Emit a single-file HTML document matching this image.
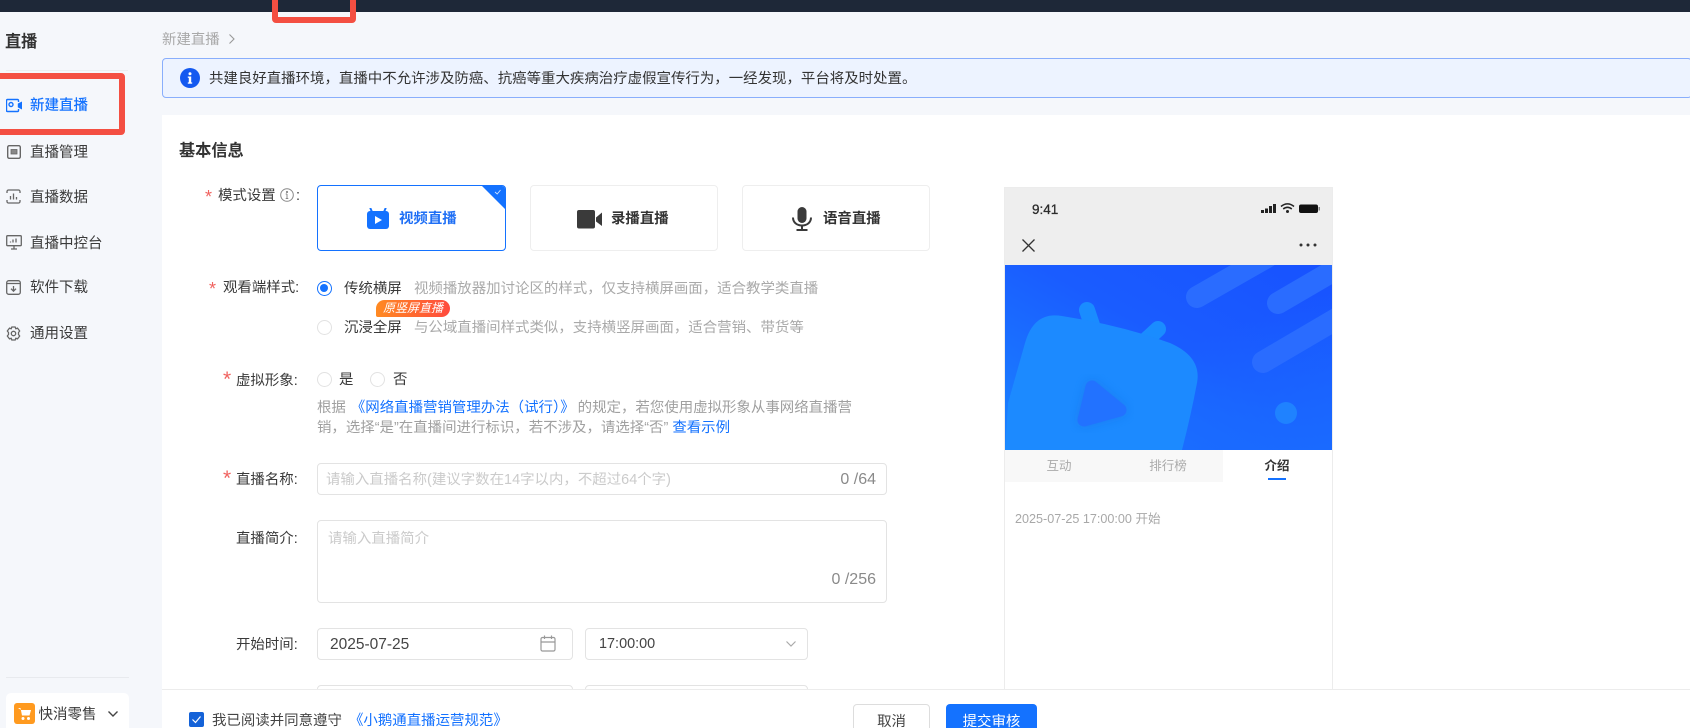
<!DOCTYPE html>
<html lang="zh"><head><meta charset="utf-8"><title>新建直播</title>
<style>
html,body{margin:0;padding:0;width:1690px;height:728px;overflow:hidden}
#w{position:relative;width:1690px;height:728px;overflow:hidden;background:#f5f7fb;font-family:"Liberation Sans","Noto Sans CJK SC",sans-serif;font-size:14.45px;color:#3a3a3a}
.a{position:absolute;box-sizing:border-box}
.t{position:absolute;white-space:nowrap;line-height:20px;margin-top:1px}
.g{color:#a9a9a9}.b{color:#1472ff}.s{color:#f0625f;font-size:18px;font-family:"Liberation Sans",sans-serif}
.box{position:absolute;box-sizing:border-box;background:#fff;border:1px solid #e3e3e3;border-radius:4px}
.card{position:absolute;box-sizing:border-box;background:#fff;border:1px solid #eee;border-radius:4px;top:185px;height:66px}
.r{position:absolute;box-sizing:border-box;width:15px;height:15px;border-radius:50%;border:1px solid #e2e2e2;background:#fff}
svg{position:absolute;display:block}
</style></head><body><div id="w">
<div class="a" style="left:0;top:0;width:1690px;height:12px;background:#1e2838"></div>

<!-- sidebar -->
<div class="t" style="left:5px;top:31px;font-size:16.2px;font-weight:700;color:#333">直播</div>
<div class="a" style="left:6px;top:70px;width:122px;height:1px;background:#ebedf0"></div>
<svg style="left:6px;top:98px" width="16" height="15" viewBox="0 0 16 15" fill="none" stroke="#1472ff" stroke-width="1.4"><path d="M12.5 4V2.5a1 1 0 0 0-1-1h-10a1 1 0 0 0-1 1v10a1 1 0 0 0 1 1h10a1 1 0 0 0 1-1V11"/><circle cx="5" cy="6.5" r="2"/><path d="M12.5 6l3-1.5v6l-3-1.5z" fill="#1472ff"/></svg>
<div class="t b" style="left:30px;top:95px;font-size:14.5px;font-weight:500">新建直播</div>
<svg style="left:7px;top:145px" width="14" height="14" viewBox="0 0 14 14" fill="none" stroke="#666" stroke-width="1.4"><rect x=".7" y=".7" width="12.6" height="12.6" rx="1.5"/><rect x="4" y="4.5" width="6" height="4.5" fill="#888" stroke-width=".8"/></svg>
<div class="t" style="left:30px;top:142px;font-size:14.5px">直播管理</div>
<svg style="left:6px;top:189px" width="15" height="15" viewBox="0 0 15 15" fill="none" stroke="#666" stroke-width="1.3"><path d="M1 4V2.5A1.5 1.5 0 0 1 2.500 1H12.500A1.500 1.500 0 0 1 14 2.500V4M1 11V12.500A1.500 1.500 0 0 0 2.500 14H12.500A1.500 1.500 0 0 0 14 12.500V11"/><path d="M4.500 7V10.500M7.500 4.500V10.500M10.500 8V10.500"/></svg>
<div class="t" style="left:30px;top:187px;font-size:14.5px">直播数据</div>
<svg style="left:6px;top:235px" width="16" height="15" viewBox="0 0 16 15" fill="none" stroke="#666" stroke-width="1.3"><rect x=".7" y=".7" width="14.600" height="10" rx="1"/><path d="M8 10.700V14M5 14H11M4.500 7.500L4.500 6.500M7 7.500V4.500M10 7.500V3.500"/></svg>
<div class="t" style="left:30px;top:233px;font-size:14.5px">直播中控台</div>
<svg style="left:6px;top:280px" width="15" height="15" viewBox="0 0 15 15" fill="none" stroke="#666" stroke-width="1.3"><rect x=".7" y=".7" width="13.600" height="13.600" rx="2"/><path d="M1 3.500H14M7.500 6V11M5 8.700L7.500 11.200L10 8.700"/></svg>
<div class="t" style="left:30px;top:277px;font-size:14.5px">软件下载</div>
<svg style="left:6px;top:326px" width="15" height="15" viewBox="0 0 15 15" fill="none" stroke="#666" stroke-width="1.3"><path d="M5.800 1H9.200L9.800 2.800L11.500 2.100L13.700 5L12.500 6.500V8.500L13.700 10L11.500 12.900L9.800 12.200L9.200 14H5.800L5.200 12.200L3.500 12.900L1.300 10L2.500 8.500V6.500L1.300 5L3.500 2.100L5.200 2.800Z" stroke-linejoin="round"/><circle cx="7.500" cy="7.500" r="2.200"/></svg>
<div class="t" style="left:30px;top:323px;font-size:14.5px">通用设置</div>
<div class="a" style="left:6px;top:677px;width:123px;height:1px;background:#e8eaee"></div>
<div class="a" style="left:6px;top:693px;width:123px;height:40px;background:#fff;border-radius:5px"></div>
<svg style="left:14px;top:703px" width="21" height="21" viewBox="0 0 21 21"><rect width="21" height="21" rx="3" fill="#ff9a1f"/><path d="M4 5H6.500L8 12.500H15.500L17 7H7" fill="#fff"/><circle cx="9" cy="15.500" r="1.500" fill="#fff"/><circle cx="14.500" cy="15.500" r="1.500" fill="#fff"/></svg>
<div class="t" style="left:38.500px;top:704px;font-size:14.5px">快消零售</div>
<svg style="left:107px;top:710px" width="12" height="8" viewBox="0 0 12 8" fill="none" stroke="#444" stroke-width="1.400"><path d="M1.500 1.500L6 6L10.500 1.500"/></svg>

<!-- breadcrumb + alert -->
<div class="t g" style="left:162px;top:29px">新建直播</div>
<svg style="left:228px;top:33px" width="8" height="12" viewBox="0 0 8 12" fill="none" stroke="#999" stroke-width="1.100"><path d="M1.500 1.500L6 6L1.500 10.500"/></svg>
<div class="a" style="left:162px;top:58px;width:1530px;height:40px;background:#edf3ff;border:1px solid #89aefc;border-radius:4px"></div>
<svg style="left:180px;top:68px" width="20" height="20" viewBox="0 0 20 20"><circle cx="10" cy="10" r="10" fill="#1459f0"/><rect x="8.800" y="8.500" width="2.400" height="7" fill="#fff"/><rect x="7.800" y="8.500" width="3" height="1.300" fill="#fff"/><rect x="7.800" y="14.400" width="4.400" height="1.300" fill="#fff"/><circle cx="10" cy="5.800" r="1.500" fill="#fff"/></svg>
<div class="t" style="left:209px;top:68px;color:#333">共建良好直播环境，直播中不允许涉及防癌、抗癌等重大疾病治疗虚假宣传行为，一经发现，平台将及时处置。</div>

<!-- main card -->
<div class="a" style="left:162px;top:115px;width:1528px;height:613px;background:#fff"></div>
<div class="t" style="left:179px;top:140px;font-size:16.2px;font-weight:700;color:#333">基本信息</div>

<!-- mode -->
<div class="t s" style="left:205px;top:186px">*</div>
<div class="t" style="left:218px;top:185px">模式设置</div>
<svg style="left:280px;top:188px" width="14" height="14" viewBox="0 0 14 14" fill="none" stroke="#888"><circle cx="7" cy="7" r="6.300"/><path d="M7 6V10.500M5.700 10.500H8.300M5.700 6H7"/><circle cx="7" cy="4" r=".6" fill="#888"/></svg>
<div class="t" style="left:296px;top:185px">:</div>
<div class="card" style="left:317px;width:189px;border:1px solid #1472ff;overflow:hidden">
<svg style="right:-1px;top:-1px" width="25" height="25" viewBox="0 0 25 25"><path d="M0 0H25V25Z" fill="#1472ff"/><path d="M14 7L16.200 9L19.500 5" fill="none" stroke="#cfe2ff" stroke-width=".9"/></svg>
</div>
<svg style="left:367px;top:208px" width="22" height="21" viewBox="0 0 22 21"><path d="M5 4L3.500 .5M17 4L18.500 .5" stroke="#1472ff" stroke-width="2" stroke-linecap="round"/><rect y="3" width="22" height="18" rx="3" fill="#1472ff"/><path d="M8 8L15 12L8 16Z" fill="#fff"/></svg>
<div class="t b" style="left:399px;top:208px;font-weight:700;color:#1f6ff5">视频直播</div>
<div class="card" style="left:530px;width:188px"></div>
<svg style="left:577px;top:210px" width="26" height="19" viewBox="0 0 26 19"><rect width="18" height="18.500" rx="2" fill="#3a3a3a"/><path d="M19 7.500L25 2.500V16L19 11.500Z" fill="#3a3a3a"/></svg>
<div class="t" style="left:611px;top:208px;font-weight:700;color:#333">录播直播</div>
<div class="card" style="left:742px;width:188px"></div>
<svg style="left:792px;top:207px" width="20" height="24" viewBox="0 0 20 24" fill="none"><rect x="5.500" y="0" width="9" height="16" rx="4.500" fill="#3a3a3a"/><path d="M1 10.500C1 15.500 5 18.500 10 18.500S19 15.500 19 10.500" stroke="#3a3a3a" stroke-width="2"/><path d="M10 18.500V23M4.500 23H15.500" stroke="#3a3a3a" stroke-width="2"/></svg>
<div class="t" style="left:823px;top:208px;font-weight:700;color:#333">语音直播</div>

<!-- viewer style -->
<div class="t s" style="left:209px;top:278px">*</div>
<div class="t" style="left:223px;top:277px">观看端样式:</div>
<div class="r" style="left:317px;top:281px;border:1.300px solid #1472ff"><div class="a" style="left:2.200px;top:2.200px;width:8px;height:8px;border-radius:50%;background:#1472ff"></div></div>
<div class="t" style="left:344px;top:278px">传统横屏</div>
<div class="t g" style="left:414px;top:278px">视频播放器加讨论区的样式，仅支持横屏画面，适合教学类直播</div>
<div class="r" style="left:317px;top:320px"></div>
<div class="t" style="left:344px;top:317px">沉浸全屏</div>
<div class="t g" style="left:414px;top:317px">与公域直播间样式类似，支持横竖屏画面，适合营销、带货等</div>
<div class="a" style="left:376px;top:300px;width:74px;height:17px;border-radius:9px 9px 9px 2px;background:linear-gradient(90deg,#ff8a22,#ff4a3e);color:#fff;font-size:12px;line-height:17px;text-align:center;font-style:italic;white-space:nowrap">原竖屏直播</div>

<!-- virtual -->
<div class="t s" style="left:223px;top:369px;font-size:21px">*</div>
<div class="t" style="left:236px;top:370px">虚拟形象:</div>
<div class="r" style="left:317px;top:372px"></div>
<div class="t" style="left:339px;top:369px">是</div>
<div class="r" style="left:370px;top:372px"></div>
<div class="t" style="left:393px;top:369px">否</div>
<div class="t g" style="left:317px;top:397px;color:#a0a0a0">根据<span class="b" style="margin:0 3px 0 5px">《网络直播营销管理办法（试行）》</span>的规定，若您使用虚拟形象从事网络直播营</div>
<div class="t g" style="left:317px;top:417px;color:#a0a0a0">销，选择“是”在直播间进行标识，若不涉及，请选择“否” <span class="b">查看示例</span></div>

<!-- name -->
<div class="t s" style="left:223px;top:468px;font-size:21px">*</div>
<div class="t" style="left:236px;top:469px">直播名称:</div>
<div class="box" style="left:317px;top:463px;width:570px;height:32px"></div>
<div class="t" style="left:326px;top:469px;color:#cbcbcb">请输入直播名称(建议字数在14字以内，不超过64个字)</div>
<div class="t" style="right:814px;top:469px;color:#8a8a8a;font-size:16px">0 /64</div>

<!-- intro -->
<div class="t" style="left:236px;top:528px">直播简介:</div>
<div class="box" style="left:317px;top:520px;width:570px;height:83px"></div>
<div class="t" style="left:328px;top:528px;color:#cbcbcb">请输入直播简介</div>
<div class="t" style="right:814px;top:569px;color:#8a8a8a;font-size:16px">0 /256</div>

<!-- time -->
<div class="t" style="left:236px;top:634px">开始时间:</div>
<div class="box" style="left:317px;top:628px;width:256px;height:32px"></div>
<div class="t" style="left:330px;top:634px;color:#444;font-size:15.500px">2025-07-25</div>
<svg style="left:540px;top:635px" width="16" height="17" viewBox="0 0 16 17" fill="none" stroke="#999" stroke-width="1.200"><rect x="1" y="2.500" width="14" height="13.500" rx="1.500"/><path d="M1 7H15M4.500 .5V4M11.500 .5V4"/></svg>
<div class="box" style="left:585px;top:628px;width:223px;height:32px"></div>
<div class="t" style="left:599px;top:633px;color:#444">17:00:00</div>
<svg style="left:785px;top:640px" width="12" height="8" viewBox="0 0 12 8" fill="none" stroke="#aaa" stroke-width="1.200"><path d="M1.500 1.500L6 6L10.500 1.500"/></svg>
<div class="box" style="left:317px;top:685px;width:256px;height:33px"></div>
<div class="box" style="left:585px;top:685px;width:223px;height:33px"></div>

<!-- phone -->
<div class="a" style="left:1004px;top:187px;width:329px;height:510px;background:#fff;border:1px solid #ececec"></div>
<div class="a" style="left:1005px;top:188px;width:327px;height:77px;background:#eee"></div>
<div class="t" style="left:1032px;top:200px;margin-top:0;font-size:13.500px;font-family:'Liberation Sans',sans-serif;color:#2c2c2c;-webkit-text-stroke:.3px #2c2c2c">9:41</div>
<svg style="left:1260px;top:202px" width="60" height="12" viewBox="0 0 60 12"><rect x="1" y="8" width="3" height="3" fill="#222"/><rect x="5" y="6.500" width="3" height="4.500" fill="#222"/><rect x="9" y="4" width="3" height="7" fill="#222"/><rect x="13" y="2" width="3" height="9" fill="#222"/><path d="M21 4.500C25 1 30 1 34 4.500M23.200 7C26 4.800 29 4.800 31.800 7" fill="none" stroke="#222" stroke-width="1.500"/><circle cx="27.500" cy="9.500" r="1.500" fill="#222"/><rect x="39" y="2.500" width="19" height="8.500" rx="2" fill="#111"/><rect x="58.500" y="5" width="1.500" height="3.500" fill="#888"/></svg>
<svg style="left:1021px;top:238px" width="15" height="15" viewBox="0 0 15 15" stroke="#333" stroke-width="1.300"><path d="M1.500 1.500L13.500 13.500M13.500 1.500L1.500 13.500"/></svg>
<svg style="left:1299px;top:243px" width="18" height="4" viewBox="0 0 18 4" fill="#333"><circle cx="2" cy="2" r="1.500"/><circle cx="9" cy="2" r="1.500"/><circle cx="16" cy="2" r="1.500"/></svg>
<svg style="left:1005px;top:265px" width="327" height="185" viewBox="0 0 327 185">
<defs>
<linearGradient id="bg" x1="0" y1="1" x2="1" y2="0"><stop offset="0" stop-color="#1a84ff"/><stop offset=".55" stop-color="#1a5cff"/><stop offset="1" stop-color="#1852ff"/></linearGradient>
<linearGradient id="bg2" x1="1" y1="1" x2=".6" y2=".4"><stop offset="0" stop-color="#1a6aff"/><stop offset="1" stop-color="#1a6aff" stop-opacity="0"/></linearGradient>
<filter id="bl" x="-40%" y="-40%" width="180%" height="180%"><feGaussianBlur stdDeviation="5"/></filter>
</defs>
<rect width="327" height="185" fill="url(#bg)"/><rect width="327" height="185" fill="url(#bg2)"/>
<g stroke="#2a6cff" stroke-width="22" stroke-linecap="round" fill="none"><path d="M192 32L262 -8"/><path d="M273 38L345 -4"/><path d="M258 97L345 46"/></g>
<circle cx="281" cy="148" r="11" fill="#1f82ff"/>
<g stroke="#1a8cff" stroke-width="16" stroke-linecap="round"><path d="M82 45L87 60"/><path d="M153 64L140 76"/></g>
<path d="M3 138L20 78Q29 46 57 51Q115 60 165 78Q197 92 192 118Q186 150 177 185H0Z" fill="#1c8aff"/>
<path d="M87 122L115 145L79 155Z" fill="#1868e0" stroke="#1868e0" stroke-width="13" stroke-linejoin="round" opacity=".4" filter="url(#bl)"/>
<path d="M87 122L115 145L79 155Z" fill="#2272ff" stroke="#2272ff" stroke-width="13" stroke-linejoin="round"/>
</svg>
<div class="a" style="left:1005px;top:450px;width:218px;height:32px;background:#f8f8f8"></div>
<div class="t" style="left:1039px;top:455px;width:40px;text-align:center;font-size:12.500px;color:#aaa">互动</div>
<div class="t" style="left:1143px;top:455px;width:50px;text-align:center;font-size:12.500px;color:#aaa">排行榜</div>
<div class="t" style="left:1257px;top:455px;width:40px;text-align:center;font-size:12.500px;font-weight:700;color:#333">介绍</div>
<div class="a" style="left:1268px;top:478px;width:18px;height:2px;background:#1472ff"></div>
<div class="t" style="left:1015px;top:508px;font-size:12.600px;color:#a8a8a8">2025-07-25 17:00:00 开始</div>

<!-- footer -->
<div class="a" style="left:162px;top:689px;width:1528px;height:39px;background:#fff;border-top:1px solid #ececec"></div>
<div class="a" style="left:189px;top:712px;width:15px;height:15px;background:#1462d8;border-radius:2px"></div>
<svg style="left:189px;top:712px" width="15" height="15" viewBox="0 0 15 15" fill="none" stroke="#fff" stroke-width="1.200"><path d="M3.500 7.500L6.500 10.500L11.500 4.500"/></svg>
<div class="t" style="left:212px;top:710px;color:#444">我已阅读并同意遵守</div>
<div class="t b" style="left:349px;top:710px">《小鹅通直播运营规范》</div>
<div class="a" style="left:853px;top:704px;width:77px;height:36px;background:#fff;border:1px solid #ddd;border-radius:4px"></div>
<div class="t" style="left:853px;top:711px;width:77px;text-align:center;color:#444">取消</div>
<div class="a" style="left:946px;top:704px;width:91px;height:36px;background:#1472ff;border-radius:4px"></div>
<div class="t" style="left:946px;top:711px;width:91px;text-align:center;color:#fff">提交审核</div>

<!-- red annotations -->
<div class="a" style="left:272px;top:-8px;width:84px;height:31px;border:6px solid #f44f42;border-radius:4px"></div>
<div class="a" style="left:-8px;top:73px;width:133px;height:62px;border:6px solid #f44f42;border-radius:4px"></div>
</div></body></html>
